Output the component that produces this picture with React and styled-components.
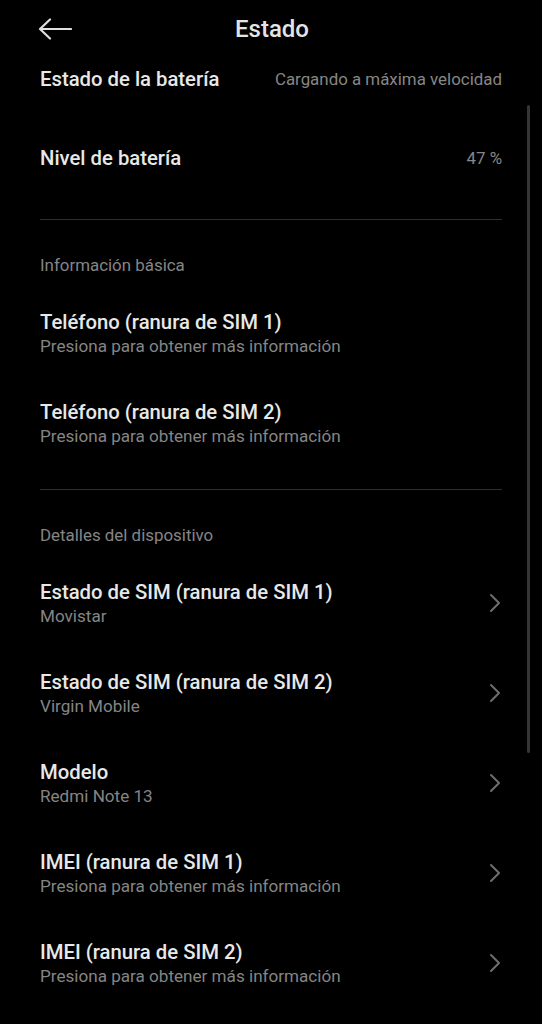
import React from 'react'
import styled, { createGlobalStyle } from 'styled-components'

const GlobalStyle = createGlobalStyle`
  html, body {
    margin: 0;
    padding: 0;
    background: #000;
  }
  body {
    font-family: Roboto, "Noto Sans", "Liberation Sans", sans-serif;
    -webkit-font-smoothing: antialiased;
  }
`

const Screen = styled.div`
  position: relative;
  width: 542px;
  height: 1024px;
  overflow: hidden;
  background: #000;
  color: #e8e8e8;
`

const Header = styled.div`
  position: relative;
  z-index: 2;
  height: 58px;
  display: flex;
  align-items: center;
  justify-content: center;
  background: #000;
`

const BackButton = styled.button`
  position: absolute;
  left: 38px;
  top: 17px;
  width: 36px;
  height: 24px;
  padding: 0;
  border: none;
  background: none;
  display: flex;
  align-items: center;
  cursor: pointer;
`

const Title = styled.h1`
  margin: 0;
  font-size: 24px;
  font-weight: 500;
  color: #e4e4e4;
  padding-left: 2px;
`

// the list is scrolled a bit under the header
const List = styled.div`
  margin-top: -19px;
  padding: 0 40px;
`

const ValueRow = styled.div`
  height: 79px;
  display: flex;
  align-items: center;
  justify-content: space-between;
`

const RowTitle = styled.div`
  font-size: 20.3px;
  font-weight: 500;
  line-height: 26px;
  color: #e8e8e8;
`

const RowValue = styled.div`
  font-size: 16.9px;
  color: #868686;
`

const Divider = styled.div`
  height: 1px;
  background: #2e2e2e;
  margin-top: ${({ $top }) => $top}px;
`

const SectionLabel = styled.div`
  padding: 34px 0 12px;
  font-size: 16.9px;
  line-height: 22px;
  color: #858585;
`

const NavRow = styled.div`
  height: 90px;
  display: flex;
  align-items: center;
  justify-content: space-between;
`

const TextBlock = styled.div`
  display: flex;
  flex-direction: column;
`

const Subtitle = styled.div`
  font-size: 17.1px;
  line-height: 22px;
  color: #858585;
`

const Chevron = styled.svg`
  width: 12px;
  height: 20px;
  margin-right: 1px;
  flex-shrink: 0;
`

const ScrollBar = styled.div`
  position: absolute;
  right: 12px;
  top: 105px;
  width: 3px;
  height: 648px;
  border-radius: 2px;
  background: #353535;
`

function ArrowIcon() {
  return (
    <svg width="34" height="22" viewBox="0 0 34 22">
      <path d="M2 11 H33 M12 1.5 L2 11 L12 20.5" fill="none" stroke="#e0e0e0" strokeWidth="2.2" strokeLinecap="round" strokeLinejoin="round" />
    </svg>
  )
}

function ChevronIcon() {
  return (
    <Chevron viewBox="0 0 12 20">
      <path d="M2 2 L10 10 L2 18" fill="none" stroke="#6e6e6e" strokeWidth="2" strokeLinecap="round" strokeLinejoin="round" />
    </Chevron>
  )
}

const basicInfo = [
  { title: 'Teléfono (ranura de SIM 1)', sub: 'Presiona para obtener más información' },
  { title: 'Teléfono (ranura de SIM 2)', sub: 'Presiona para obtener más información' },
]

const deviceInfo = [
  { title: 'Estado de SIM (ranura de SIM 1)', sub: 'Movistar' },
  { title: 'Estado de SIM (ranura de SIM 2)', sub: 'Virgin Mobile' },
  { title: 'Modelo', sub: 'Redmi Note 13' },
  { title: 'IMEI (ranura de SIM 1)', sub: 'Presiona para obtener más información' },
  { title: 'IMEI (ranura de SIM 2)', sub: 'Presiona para obtener más información' },
]

function Item({ title, sub, arrow }) {
  return (
    <NavRow>
      <TextBlock>
        <RowTitle>{title}</RowTitle>
        <Subtitle>{sub}</Subtitle>
      </TextBlock>
      {arrow && <ChevronIcon />}
    </NavRow>
  )
}

export default function App() {
  return (
    <Screen>
      <GlobalStyle />
      <Header>
        <BackButton aria-label="Atrás">
          <ArrowIcon />
        </BackButton>
        <Title>Estado</Title>
      </Header>

      <List>
        <ValueRow>
          <RowTitle>Estado de la batería</RowTitle>
          <RowValue>Cargando a máxima velocidad</RowValue>
        </ValueRow>
        <ValueRow>
          <RowTitle>Nivel de batería</RowTitle>
          <RowValue>47 %</RowValue>
        </ValueRow>

        <Divider $top={22} />
        <SectionLabel>Información básica</SectionLabel>
        {basicInfo.map((it) => (
          <Item key={it.title} {...it} />
        ))}

        <Divider $top={21} />
        <SectionLabel>Detalles del dispositivo</SectionLabel>
        {deviceInfo.map((it) => (
          <Item key={it.title} {...it} arrow />
        ))}
      </List>

      <ScrollBar />
    </Screen>
  )
}
